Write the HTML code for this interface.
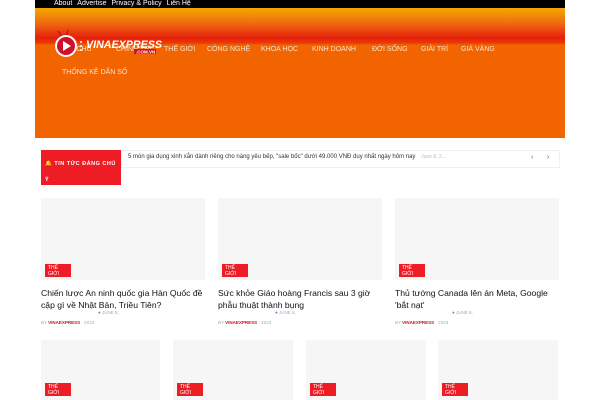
<!DOCTYPE html>
<html><head><meta charset="utf-8"><style>
*{margin:0;padding:0;box-sizing:border-box}
body{width:600px;height:400px;overflow:hidden;background:#fff;font-family:"Liberation Sans","DejaVu Sans",sans-serif;position:relative}
.abs{position:absolute}
.top{left:35px;top:0;width:530px;height:8px;background:#000;color:#fff;font-size:7px;line-height:8px;padding-left:19px}
.top span{margin-right:5px}
.hdr{left:35px;top:8px;width:530px;height:130px;background:linear-gradient(to bottom,#f6a700 0px,#f07010 14px,#e5210c 30px,#ea3a05 35px,#f26400 37px,#f26400 130px)}
.nav{font-size:7px;color:#fbe0c8;top:46px}
.card{background:#f6f6f6}
.badge{background:#ee1c25;color:#fff;font-size:5px;line-height:5.5px;padding:2px 3px;width:26px;height:13px}
.t{font-size:8.6px;line-height:12px;color:#111}
.d{font-size:4.5px;color:#aaa}
.by{font-size:4.5px;color:#aaa}
.by b{color:#c8102e}
</style></head><body>
<div class="abs top"><span>About</span><span>Advertise</span><span>Privacy &amp; Policy</span><span>Liên Hệ</span></div>
<div class="abs hdr"></div>
<div class="abs nav" style="left:69px">G CHỦ</div>
<div class="abs nav" style="left:116px">CHÍNH TRỊ</div>
<div class="abs nav" style="left:164px">THẾ GIỚI</div>
<div class="abs nav" style="left:207px">CÔNG NGHỆ</div>
<div class="abs nav" style="left:261px">KHOA HỌC</div>
<div class="abs nav" style="left:312px">KINH DOANH</div>
<div class="abs nav" style="left:372px">ĐỜI SỐNG</div>
<div class="abs nav" style="left:421px">GIẢI TRÍ</div>
<div class="abs nav" style="left:461px">GIÁ VÀNG</div>
<div class="abs nav" style="left:62px;top:69px">THỐNG KÊ DÂN SỐ</div>
<svg class="abs" style="left:52px;top:28px" width="115" height="32" viewBox="0 0 115 32">
<line x1="6" y1="3" x2="10" y2="9" stroke="#c8102e" stroke-width="1.5"/><line x1="16" y1="2" x2="14" y2="9" stroke="#c8102e" stroke-width="1.5"/>
<circle cx="14" cy="18" r="11" fill="#fff"/><circle cx="14" cy="18" r="9" fill="#d0102a"/>
<path d="M11 13 L19 18 L11 23Z" fill="#fff"/>
<circle cx="29" cy="14" r="1" fill="#fff"/><circle cx="29" cy="18" r="1" fill="#fff"/><circle cx="29" cy="22" r="1" fill="#fff"/>
<text x="34" y="20" font-family="Liberation Sans" font-weight="bold" font-style="italic" font-size="11" fill="#fff" textLength="76" lengthAdjust="spacingAndGlyphs">VINAEXPRESS</text>
<rect x="82" y="21" width="22" height="5" fill="#d0102a"/>
<text x="84" y="25.5" font-family="Liberation Sans" font-weight="bold" font-size="4.5" fill="#fff">.COM.VN</text>
</svg>
<div class="abs" style="left:41px;top:150px;width:80px;height:35px;background:#ee1c25;color:#fff;font-size:5.5px;font-weight:bold;padding:6px 0 0 4px;line-height:16px;letter-spacing:.5px">🔔 TIN TỨC ĐÁNG CHÚ<br>Ý</div>
<div class="abs" style="left:121px;top:150px;width:439px;height:18px;border:1px solid #f0f0f0"></div>
<div class="abs" style="left:128px;top:154px;font-size:6px;color:#333;white-space:nowrap">5 món gia dụng xinh xắn dành riêng cho nàng yêu bếp, "sale bốc" dưới 49.000 VNĐ duy nhất ngày hôm nay <span style="color:#bbb;font-size:5px;margin-left:4px">June 8, 2...</span></div>
<div class="abs" style="left:531px;top:154px;font-size:7px;color:#555">‹</div>
<div class="abs" style="left:547px;top:154px;font-size:7px;color:#555">›</div>

<div class="abs card" style="left:41px;top:198px;width:164px;height:82px"></div>
<div class="abs card" style="left:218px;top:198px;width:164px;height:82px"></div>
<div class="abs card" style="left:395px;top:198px;width:164px;height:82px"></div>
<div class="abs badge" style="left:45px;top:264px">THẾ<br>GIỚI</div>
<div class="abs badge" style="left:222px;top:264px">THẾ<br>GIỚI</div>
<div class="abs badge" style="left:399px;top:264px">THẾ<br>GIỚI</div>
<div class="abs t" style="left:41px;top:287px;width:168px">Chiến lược An ninh quốc gia Hàn Quốc đề cập gì về Nhật Bản, Triều Tiên?</div>
<div class="abs t" style="left:218px;top:287px;width:168px">Sức khỏe Giáo hoàng Francis sau 3 giờ phẫu thuật thành bụng</div>
<div class="abs t" style="left:395px;top:287px;width:168px">Thủ tướng Canada lên án Meta, Google 'bắt nạt'</div>
<div class="abs d" style="left:98px;top:310px"><span style="color:#4a90d9">●</span> JUNE 8,</div>
<div class="abs d" style="left:275px;top:310px"><span style="color:#4a90d9">●</span> JUNE 8,</div>
<div class="abs d" style="left:452px;top:310px"><span style="color:#4a90d9">●</span> JUNE 8,</div>
<div class="abs by" style="left:41px;top:320px">BY <b>VINAEXPRESS</b> · 2023</div>
<div class="abs by" style="left:218px;top:320px">BY <b>VINAEXPRESS</b> · 2023</div>
<div class="abs by" style="left:395px;top:320px">BY <b>VINAEXPRESS</b> · 2023</div>

<div class="abs card" style="left:41px;top:340px;width:119px;height:60px"></div>
<div class="abs card" style="left:173px;top:340px;width:120px;height:60px"></div>
<div class="abs card" style="left:306px;top:340px;width:120px;height:60px"></div>
<div class="abs card" style="left:438px;top:340px;width:120px;height:60px"></div>
<div class="abs badge" style="left:45px;top:383px">THẾ<br>GIỚI</div>
<div class="abs badge" style="left:177px;top:383px">THẾ<br>GIỚI</div>
<div class="abs badge" style="left:310px;top:383px">THẾ<br>GIỚI</div>
<div class="abs badge" style="left:442px;top:383px">THẾ<br>GIỚI</div>
</body></html>
